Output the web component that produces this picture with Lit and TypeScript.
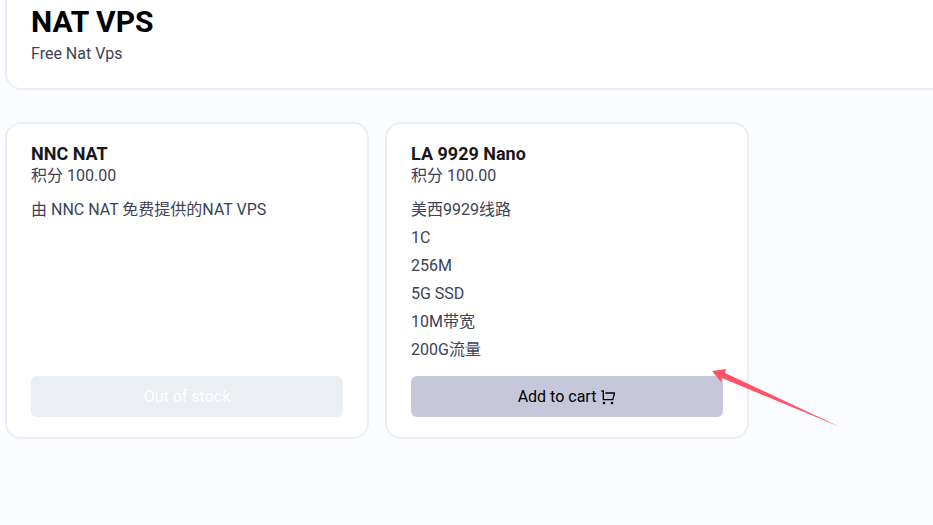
import { LitElement, html, css, svg } from "lit";
import { customElement, property } from "lit/decorators.js";

const cartIcon = svg`<path d="M4 16V4H2V2h3a1 1 0 0 1 1 1v12h12.438l2-8H8V5h13.72a1 1 0 0 1 .97 1.243l-2.5 10a1 1 0 0 1-.97.757H5a1 1 0 0 1-1-1zm2 7a2 2 0 1 1 0-4 2 2 0 0 1 0 4zm12 0a2 2 0 1 1 0-4 2 2 0 0 1 0 4z" fill="currentColor" />`;

interface Product {
  name: string;
  price: string;
  lines: string[];
  inStock: boolean;
}

const products: Product[] = [
  {
    name: "NNC NAT",
    price: "积分 100.00",
    lines: ["由 NNC NAT 免费提供的NAT VPS"],
    inStock: false,
  },
  {
    name: "LA 9929 Nano",
    price: "积分 100.00",
    lines: ["美西9929线路", "1C", "256M", "5G SSD", "10M带宽", "200G流量"],
    inStock: true,
  },
];

@customElement("product-card")
export class ProductCard extends LitElement {
  @property({ attribute: false }) product!: Product;

  static styles = css`
    :host {
      box-sizing: border-box;
      display: flex;
      flex-direction: column;
      padding: 20px 24px;
      border: 2px solid #ebeef3;
      border-radius: 16px;
      background: #fff;
    }
    .name {
      margin: 0;
      font-size: 18px;
      line-height: 20px;
      font-weight: 700;
      color: #18181b;
    }
    .price {
      margin: 0;
      line-height: 24px;
    }
    .details {
      flex: 1;
      margin: 8px 0 12px;
    }
    .line {
      margin: 0;
      line-height: 28px;
    }
    .action {
      display: flex;
      align-items: center;
      justify-content: center;
      gap: 4px;
      min-height: 41px;
      padding: 1px 16px 0;
      border: 0;
      border-radius: 6px;
      font: inherit;
      color: #000;
      background: #c6c8da;
      cursor: pointer;
    }
    .action:disabled {
      color: #fff;
      background: #ebeef3;
      cursor: not-allowed;
    }
    .icon {
      width: 16px;
      height: 16px;
    }
  `;

  render() {
    const { name, price, lines, inStock } = this.product;
    return html`
      <h2 class="name">${name}</h2>
      <p class="price">${price}</p>
      <div class="details">
        ${lines.map((line) => html`<p class="line">${line}</p>`)}
      </div>
      ${inStock
        ? html`<button class="action" type="button">
            <span>Add to cart</span>
            <svg class="icon" viewBox="0 0 24 24" aria-hidden="true">${cartIcon}</svg>
          </button>`
        : html`<button class="action" type="button" disabled>Out of stock</button>`}
    `;
  }
}

@customElement("app-root")
export class AppRoot extends LitElement {
  static styles = css`
    :host {
      box-sizing: border-box;
      display: block;
      min-height: 100vh;
      padding-left: 5px;
      background: #fbfcff;
      color: #3c4257;
      font-family: Roboto, "Noto Sans CJK SC", sans-serif;
      font-size: 16px;
      line-height: 24px;
    }
    .header {
      padding: 4px 24px 22px;
      border: solid #ebeef3;
      border-width: 0 0 2px 2px;
      border-bottom-left-radius: 16px;
      background: #fff;
    }
    .title {
      margin: 0 0 2px;
      font-size: 30px;
      line-height: 36px;
      font-weight: 700;
      color: #000;
    }
    .subtitle {
      margin: 0;
    }
    .products {
      display: flex;
      gap: 16px;
      margin-top: 32px;
    }
    .product {
      position: relative;
      display: flex;
      flex: 1 1 0;
      max-width: 364px;
    }
    .product product-card {
      flex: 1;
      min-width: 0;
    }
    .pointer {
      position: absolute;
      right: -91px;
      bottom: 12px;
      width: 129px;
      height: 58px;
      pointer-events: none;
    }
  `;

  render() {
    return html`
      <header class="header">
        <h1 class="title">NAT VPS</h1>
        <p class="subtitle">Free Nat Vps</p>
      </header>
      <main class="products">
        ${products.map(
          (product) => html`<article class="product">
            <product-card .product=${product}></product-card>
            ${product.inStock
              ? html`<svg class="pointer" viewBox="0 0 129 58" aria-hidden="true">
                  <path d="M1 2 15 0 14 4 129 58 11 9 10 13Z" fill="#ff5262" />
                </svg>`
              : null}
          </article>`
        )}
      </main>
    `;
  }
}
